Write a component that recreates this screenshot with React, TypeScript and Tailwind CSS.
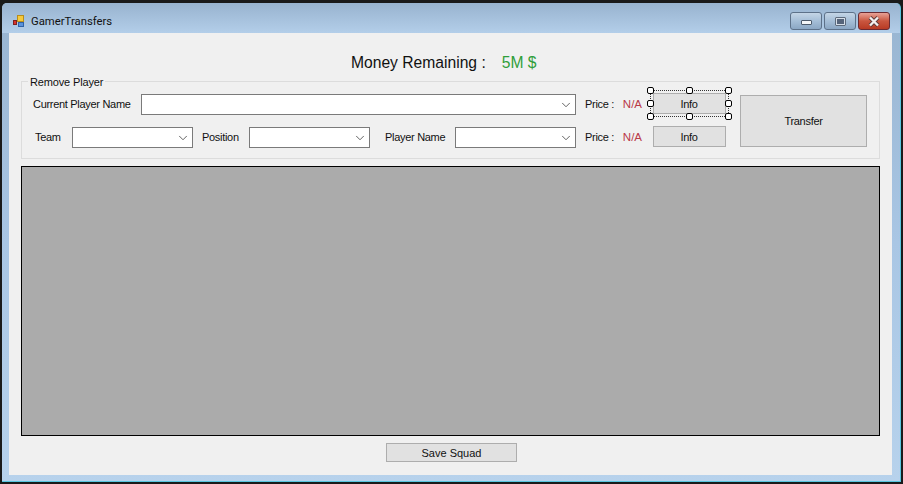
import React from "react";
import { ChevronDown } from "lucide-react";

const font = "font-['Liberation_Sans',Arial,sans-serif]";

function Combo({ className }: { className: string }) {
  return (
    <div className={`h-[21px] bg-white border border-[#7a7a7a] flex items-center justify-end pr-[2px] ${className}`}>
      <ChevronDown size={14} strokeWidth={1.3} className="text-[#333333]" />
    </div>
  );
}

function Label({ children, className = "" }: { children: React.ReactNode; className?: string }) {
  return <span className={`text-[11px] tracking-[-0.3px] leading-[14px] text-[#111111] whitespace-nowrap pb-[2px] ${className}`}>{children}</span>;
}

function WinButton({ children, className }: { children: React.ReactNode; className: string }) {
  return (
    <div className={`h-[18px] w-[32px] rounded-[3px] border flex items-center justify-center ${className}`}>
      {children}
    </div>
  );
}

function FormButton({ children, className }: { children: React.ReactNode; className: string }) {
  return (
    <div className={`bg-[#e1e1e1] border border-[#adadad] flex items-center justify-center pt-[1px] text-[11px] tracking-[-0.3px] text-[#111111] ${className}`}>
      {children}
    </div>
  );
}

function Grip({ className }: { className: string }) {
  return <div className={`absolute w-[7px] h-[7px] rounded-[2px] bg-white border border-black ${className}`} />;
}

function AppIcon() {
  return (
    <svg width="14" height="14" viewBox="0 0 14 14" className="shrink-0 mt-[11px]">
      <rect x="1.5" y="6.5" width="3" height="4" fill="#d8322a" stroke="#7c2020" />
      <rect x="5.5" y="1.5" width="6" height="6" fill="#f6c93c" stroke="#b78d1c" />
      <rect x="6.5" y="8.5" width="5" height="4" fill="#5b93dc" stroke="#2f62a8" />
    </svg>
  );
}

export default function App() {
  return (
    <div className={`w-[903px] h-[484px] bg-[#1a1a1a] pt-[3px] pb-[2px] pl-[2px] pr-[2px] ${font}`}>
      <div className="h-[479px] rounded-t-[5px] bg-gradient-to-b from-[#98b4d0] via-[#a9c6e4] to-[#b7d2ec] border-b border-r border-[#58c4de] flex flex-col">
        {/* title bar */}
        <div className="h-[30px] shrink-0 flex items-start pl-[10px] pr-[10px] bg-gradient-to-b from-[#98b3cf] to-[#b3cee9] rounded-t-[5px]">
          <AppIcon />
          <span className="ml-[5px] mt-[10px] text-[11.3px] leading-[18px] text-[#111111] font-['Roboto',sans-serif]">GamerTransfers</span>
          <div className="ml-auto flex gap-[2px] mt-[9px]">
            <WinButton className="border-[#5d7189] bg-gradient-to-b from-[#c4d5e6] via-[#a5bed7] to-[#8ba7c4]">
              <div className="w-[11px] h-[5px] mt-[3px] bg-[#f4f6f8] border border-[#4c5a6b] rounded-[1px]" />
            </WinButton>
            <WinButton className="border-[#5d7189] bg-gradient-to-b from-[#c4d5e6] via-[#a5bed7] to-[#8ba7c4]">
              <div className="w-[11px] h-[9px] bg-[#55647a] border-2 border-[#d5dee8] rounded-[1px] outline outline-1 outline-[#5d6b7d] -outline-offset-1" />
            </WinButton>
            <WinButton className="border-[#6a2a32] bg-gradient-to-b from-[#e8a196] via-[#c9563f] to-[#b83a24]">
              <svg width="14" height="11" viewBox="0 0 14 11">
                <path d="M3 1.5 L11 9.5 M11 1.5 L3 9.5" stroke="#5a3a3a" strokeWidth="4" />
                <path d="M3 1.5 L11 9.5 M11 1.5 L3 9.5" stroke="#f4f0f0" strokeWidth="2.4" />
              </svg>
            </WinButton>
          </div>
        </div>

        {/* client area */}
        <div className="w-[883px] h-[442px] ml-[7px] bg-[#f0f0f0] px-[12px] flex flex-col">
          <div className="h-[48px] shrink-0 flex items-center pl-[330px] pt-[12px]">
            <span className="text-[15.65px] text-[#111111]">Money Remaining :</span>
            <span className="ml-[16px] text-[15.65px] text-[#2f9e3a]">5M $</span>
          </div>

          {/* group box */}
          <div className="relative w-[859px] h-[78px] shrink-0 border border-[#dcdcdc] flex pl-[11px] pt-[12px]">
            <span className="absolute -top-[7px] left-[6px] px-[2px] bg-[#f0f0f0] text-[11px] tracking-[-0.15px] leading-[14px] text-[#111111]">Remove Player</span>
            <div className="w-[543px] flex flex-col gap-[12px]">
              <div className="flex items-center">
                <Label className="w-[108px]">Current Player Name</Label>
                <Combo className="w-[435px]" />
              </div>
              <div className="flex items-center">
                <Label className="w-[39px] pl-[2px]">Team</Label>
                <Combo className="w-[121px]" />
                <Label className="w-[46px] pl-[9px]">Position</Label>
                <Combo className="w-[121px] ml-[10px]" />
                <Label className="w-[85px] pl-[15px]">Player Name</Label>
                <Combo className="w-[121px]" />
              </div>
            </div>
            <div className="w-[57px] ml-[9px] flex flex-col gap-[12px]">
              <div className="h-[21px] flex items-center"><Label>Price :</Label><Label className="ml-auto !text-[11.5px] !tracking-[0px] !text-[#b93a48]">N/A</Label></div>
              <div className="h-[21px] flex items-center"><Label>Price :</Label><Label className="ml-auto !text-[11.5px] !tracking-[0px] !text-[#b93a48]">N/A</Label></div>
            </div>
            <div className="w-[73px] ml-[11px] -mt-[1px] flex flex-col gap-[12px]">
              <div className="relative">
                <FormButton className="h-[21px] pr-[1px]">Info</FormButton>
                <div className="absolute -top-[3px] -left-[3px] -right-[3px] -bottom-[3px] border border-dotted border-[#333333]" />
                <Grip className="-top-[6px] -left-[6px]" />
                <Grip className="-top-[6px] left-[33px]" />
                <Grip className="-top-[6px] -right-[6px]" />
                <Grip className="top-[7px] -left-[6px]" />
                <Grip className="top-[7px] -right-[6px]" />
                <Grip className="-bottom-[6px] -left-[6px]" />
                <Grip className="-bottom-[6px] left-[33px]" />
                <Grip className="-bottom-[6px] -right-[6px]" />
              </div>
              <FormButton className="h-[21px] pr-[1px]">Info</FormButton>
            </div>
            <FormButton className="w-[127px] h-[52px] ml-[14px] mt-[1px]">Transfer</FormButton>
          </div>

          {/* panel */}
          <div className="w-[859px] h-[270px] mt-[7px] shrink-0 bg-[#ababab] border border-black" />

          <div className="flex justify-center mt-[7px] pl-[2px]">
            <FormButton className="w-[131px] h-[19px] !tracking-[0px]">Save Squad</FormButton>
          </div>
        </div>
      </div>
    </div>
  );
}
